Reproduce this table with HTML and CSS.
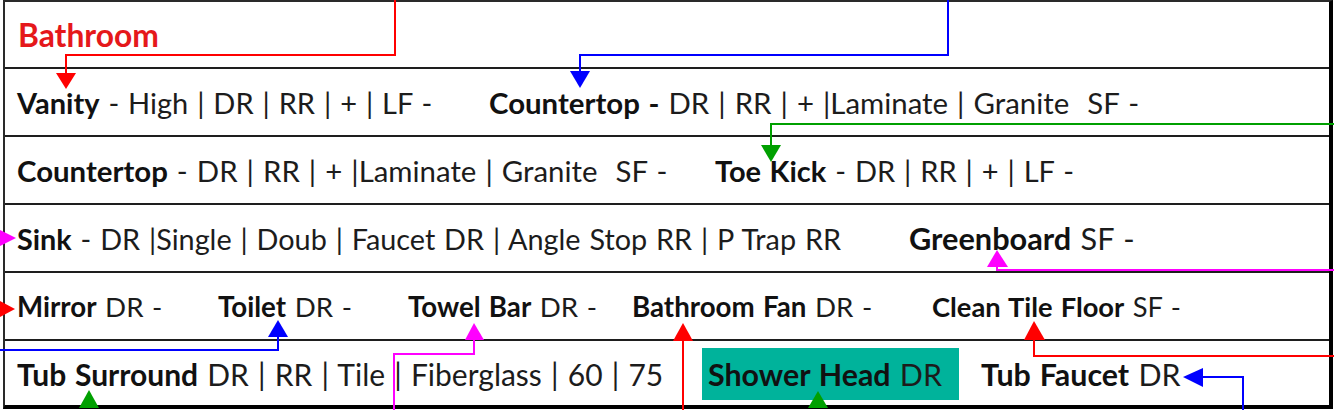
FILE: index.html
```html
<!DOCTYPE html>
<html lang="en">
<head>
<meta charset="utf-8">
<title>Bathroom</title>
<link rel="stylesheet" href="styles.css">
</head>
<body>
<div class="sheet">
  <div class="grid">
    <div class="row r1">
      <span class="title">Bathroom</span>
    </div>
    <div class="row r2">
      <span class="item c-vanity"><b>Vanity</b> - High | DR | RR | + | LF -</span>
      <span class="item wide"><b>Countertop -</b> DR | RR | + |Laminate | Granite  SF -</span>
    </div>
    <div class="row r3">
      <span class="item c-counter wide"><b>Countertop</b> - DR | RR | + |Laminate | Granite  SF -</span>
      <span class="item"><b>Toe Kick</b> - DR | RR | + | LF -</span>
    </div>
    <div class="row r4">
      <span class="item c-sink"><b>Sink</b> - DR |Single | Doub | Faucet DR | Angle Stop RR | P Trap RR</span>
      <span class="item green"><b>Greenboard</b> SF -</span>
    </div>
    <div class="row r5">
      <span class="item c-mirror"><b>Mirror</b> DR -</span>
      <span class="item c-toilet"><b>Toilet</b> DR -</span>
      <span class="item c-towel"><b>Towel Bar</b> DR -</span>
      <span class="item c-fan"><b>Bathroom Fan</b> DR -</span>
      <span class="item clean"><b>Clean Tile Floor</b> SF -</span>
    </div>
    <div class="row r6">
      <span class="item c-tub"><b>Tub Surround</b> DR | RR | Tile | Fiberglass | 60 | 75</span>
      <span class="item shower"><b>Shower Head</b> DR</span>
      <span class="item faucet"><b>Tub Faucet</b> DR</span>
    </div>
  </div>

  <svg class="wires" width="1334" height="410" viewBox="0 0 1334 410" xmlns="http://www.w3.org/2000/svg">
    <g fill="none" stroke-width="2">
      <path d="M395 0 V55 H66 V74" stroke="#ff0000"/>
      <path d="M948 0 V55 H580 V72" stroke="#0000ff"/>
      <path d="M1334 124 H771 V146" stroke="#00a000"/>
      <path d="M1334 270 H997 V266" stroke="#ff00ff"/>
      <path d="M0 350 H278 V337" stroke="#0000ff"/>
      <path d="M394 410 V354 H474 V340" stroke="#ff00ff"/>
      <path d="M683 410 V341" stroke="#ff0000"/>
      <path d="M1334 356 H1034 V340" stroke="#ff0000"/>
      <path d="M1243 410 V377 H1202" stroke="#0000ff"/>
    </g>
    <polygon points="56,73 76,73 66,89" fill="#ff0000"/>
    <polygon points="570,71 590,71 580,88" fill="#0000ff"/>
    <polygon points="761,145 781,145 771,162" fill="#00a000"/>
    <polygon points="0,230 0,246 16,238" fill="#ff00ff"/>
    <polygon points="987,267 1008,267 997,250" fill="#ff00ff"/>
    <polygon points="0,301 0,317 15,309" fill="#ff0000"/>
    <polygon points="268,337 288,337 278,320" fill="#0000ff"/>
    <polygon points="465,340 484,340 474,323" fill="#ff00ff"/>
    <polygon points="673,341 693,341 683,323" fill="#ff0000"/>
    <polygon points="1024,340 1045,340 1034,321" fill="#ff0000"/>
    <polygon points="79,408 99,408 89,390" fill="#00a000"/>
    <polygon points="808,408 828,408 818,391" fill="#00a000"/>
    <polygon points="1203,368 1203,387 1183,377" fill="#0000ff"/>
  </svg>
</div>
</body>
</html>
```

FILE: styles.css
```css
html, body {
  margin: 0;
  padding: 0;
  background: #ffffff;
}

body {
  width: 1334px;
  height: 410px;
  overflow: hidden;
  font-family: Lato, "Open Sans", "Liberation Sans", sans-serif;
  color: #1c1c1c;
}

.sheet {
  position: relative;
  width: 1334px;
  height: 410px;
}

.grid {
  margin-left: 3px;
  width: 1324px;
  border-left: 2px solid #2a2a2a;
  border-right: 4px solid #000;
  border-top: 2px solid #2a2a2a;
  border-bottom: 4px solid #000;
  display: flex;
  flex-direction: column;
}

.row {
  height: 68px;
  display: flex;
  align-items: center;
  padding-left: 12px;
  padding-top: 1px;
  border-top: 2px solid #1e1e1e;
  font-size: 29px;
  word-spacing: 1.5px;
  white-space: pre;
  box-sizing: border-box;
}

.row.r1 {
  border-top: none;
  height: 65px;
  padding-left: 13px;
  padding-top: 0;
}

.row.r5 {
  font-size: 27.7px;
}

.row.r6 {
  height: 66px;
  font-size: 30.4px;
}

.title {
  color: #e5181b;
  font-weight: 700;
  font-size: 31.8px;
}

.item {
  flex: none;
}

.item b {
  font-weight: 700;
  color: #111;
}

.wide { font-size: 29.4px; }
.green { font-size: 30.7px; }
.clean { font-size: 27.3px; }

.c-vanity { width: 472px; }
.c-counter { width: 698px; }
.c-sink { width: 892px; font-size: 28.8px; }
.c-mirror { width: 201px; }
.c-toilet { width: 190px; }
.c-towel { width: 224px; }
.c-fan { width: 300px; }
.c-tub { width: 685px; font-size: 30px; }

.shower {
  width: 257px;
  height: 52px;
  box-sizing: border-box;
  padding-left: 6px;
  background: #00b39b;
  display: flex;
  align-items: center;
}

.faucet {
  margin-left: 22px;
}

.wires {
  position: absolute;
  top: 0;
  left: 0;
  pointer-events: none;
}
```
